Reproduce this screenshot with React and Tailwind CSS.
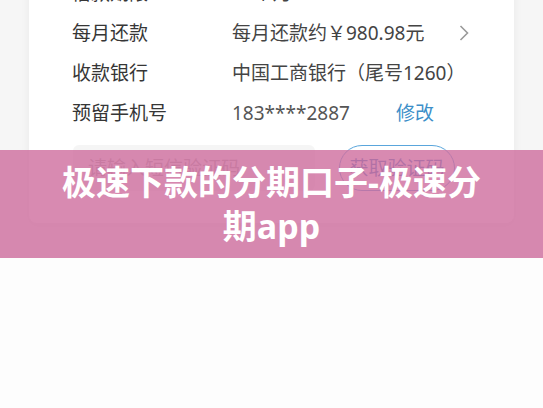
const rows = [
  { label: "借款期限", value: "12个月" },
  { label: "每月还款", value: "每月还款约￥980.98元", arrow: true },
  { label: "收款银行", value: "中国工商银行（尾号1260）" },
  { label: "预留手机号", value: "183****2887", edit: true },
]

function App() {
  return (
    <div
      className="relative h-[408px] w-full overflow-hidden bg-[#fdfdfd]"
      style={{ fontFamily: '"Noto Sans", "Noto Sans CJK SC", sans-serif' }}
    >
      <div className="h-[258px] overflow-hidden bg-[#f6f6f6]">
        <div className="-mt-[27px] ml-[29px] w-[485px] rounded-lg bg-white pb-[32px] shadow-[0_2px_10px_rgba(0,0,0,0.06)]">
          {rows.map((row) => (
            <div key={row.label} className="flex h-10 items-center pl-[43px] pr-[45px] text-[19px]">
              <span className="w-[160px] shrink-0 text-[#363636]">{row.label}</span>
              {row.edit ? (
                <div className="flex items-center">
                  <span className="w-[164px] text-[#555]">{row.value}</span>
                  <span className="text-[#3d8fc9]">修改</span>
                </div>
              ) : (
                <div className="flex flex-1 items-center justify-between text-[#444]">
                  <span>{row.value}</span>
                  {row.arrow && (
                    <svg width="10" height="16" viewBox="0 0 10 16" className="mr-[0px]">
                      <polyline points="1.5,1 8.5,8 1.5,15" fill="none" stroke="#9a9a9a" strokeWidth="1.6" />
                    </svg>
                  )}
                </div>
              )}
            </div>
          ))}
          <div className="mt-3 flex items-center pl-[44px]">
            <div className="flex h-[46px] w-[242px] items-center rounded-md bg-[#f5f5f5] pl-[15px] text-[19px] text-[#b0b0b0]">
              请输入短信验证码
            </div>
            <div className="ml-[24px] flex h-[46px] w-[116px] items-center justify-center rounded-full border-[1.5px] border-[#5aa6dc] text-[19px] text-[#3f82c4]">
              获取验证码
            </div>
          </div>
        </div>
      </div>

      <div className="absolute left-0 right-0 top-[150px] flex h-[108px] items-center justify-center bg-[rgba(206,109,158,0.8)] px-[50px]">
        <h1 className="text-center text-[34px] font-bold leading-[44px] text-white">
          极速下款的分期口子-极速分期app
        </h1>
      </div>
    </div>
  )
}

export default App
